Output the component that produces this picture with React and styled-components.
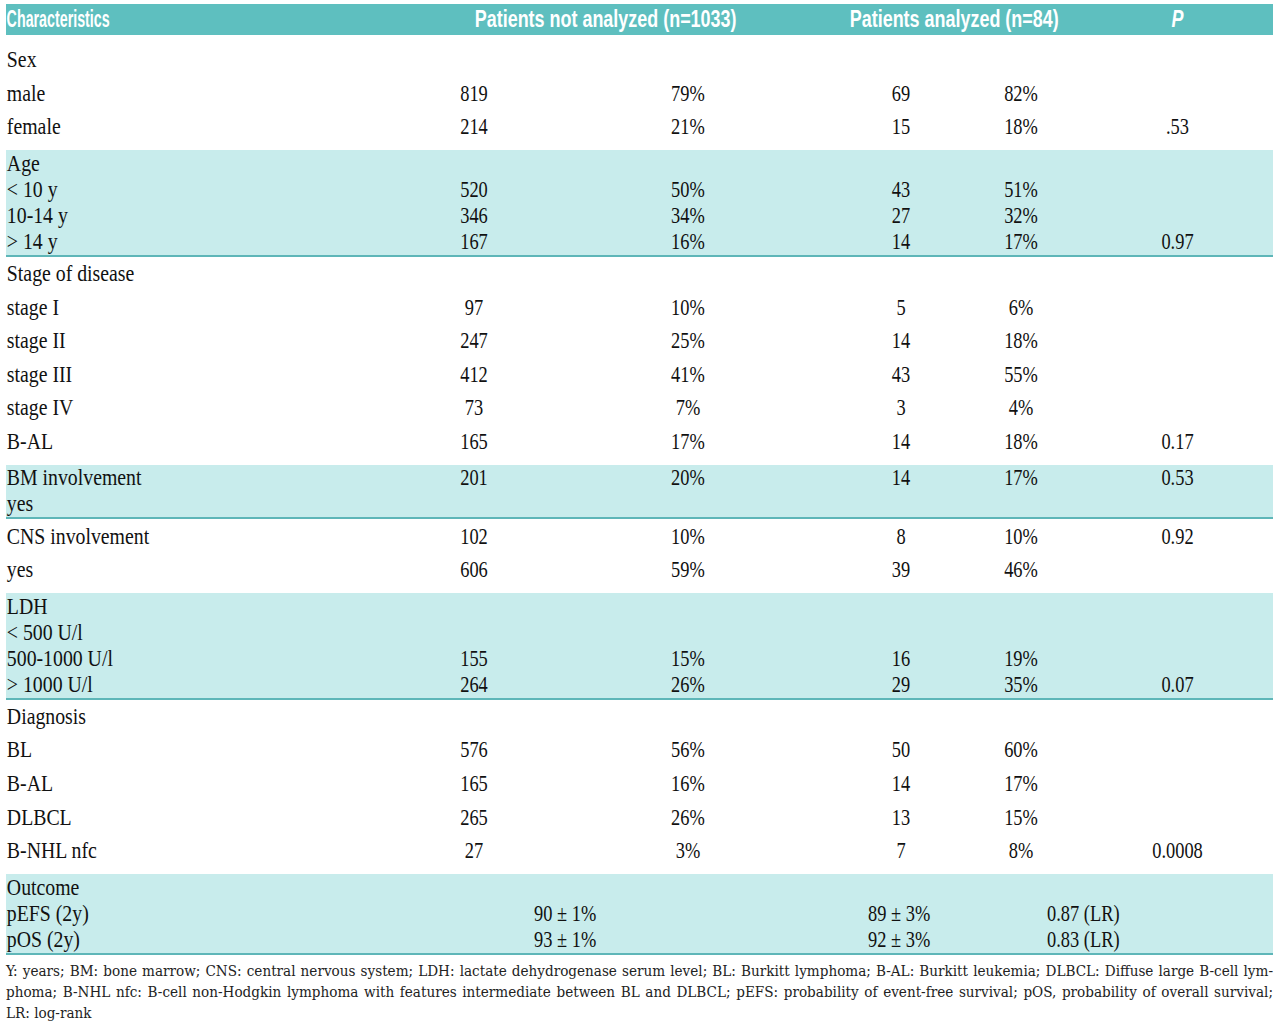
import React from "react";
import styled, { createGlobalStyle } from "styled-components";

const GlobalStyle = createGlobalStyle`
  body {
    margin: 0;
    background: #ffffff;
    color: #111;
  }
`;

const COLS = "408px 120px 308px 118px 122px 1fr";

const sections = [
  {
    band: false,
    first: true,
    rows: [
      ["Sex"],
      ["male", "819", "79%", "69", "82%", ""],
      ["female", "214", "21%", "15", "18%", ".53"],
    ],
  },
  {
    band: true,
    rows: [
      ["Age"],
      ["< 10 y", "520", "50%", "43", "51%", ""],
      ["10-14 y", "346", "34%", "27", "32%", ""],
      ["> 14 y", "167", "16%", "14", "17%", "0.97"],
    ],
  },
  {
    band: false,
    rows: [
      ["Stage of disease"],
      ["stage I", "97", "10%", "5", "6%", ""],
      ["stage II", "247", "25%", "14", "18%", ""],
      ["stage III", "412", "41%", "43", "55%", ""],
      ["stage IV", "73", "7%", "3", "4%", ""],
      ["B-AL", "165", "17%", "14", "18%", "0.17"],
    ],
  },
  {
    band: true,
    rows: [
      ["BM involvement", "201", "20%", "14", "17%", "0.53"],
      ["yes"],
    ],
  },
  {
    band: false,
    rows: [
      ["CNS involvement", "102", "10%", "8", "10%", "0.92"],
      ["yes", "606", "59%", "39", "46%", ""],
    ],
  },
  {
    band: true,
    rows: [
      ["LDH"],
      ["< 500 U/l"],
      ["500-1000 U/l", "155", "15%", "16", "19%", ""],
      ["> 1000 U/l", "264", "26%", "29", "35%", "0.07"],
    ],
  },
  {
    band: false,
    rows: [
      ["Diagnosis"],
      ["BL", "576", "56%", "50", "60%", ""],
      ["B-AL", "165", "16%", "14", "17%", ""],
      ["DLBCL", "265", "26%", "13", "15%", ""],
      ["B-NHL nfc", "27", "3%", "7", "8%", "0.0008"],
    ],
  },
];

const outcome = [
  { label: "pEFS (2y)", left: "90 ± 1%", right: "89 ± 3%", p: "0.87 (LR)" },
  { label: "pOS (2y)", left: "93 ± 1%", right: "92 ± 3%", p: "0.83 (LR)" },
];

const Page = styled.div`
  width: 1267px;
  margin: 4px 7px 0 6px;
`;

const HeaderBar = styled.div`
  display: grid;
  grid-template-columns: 468px 375px 233px 1fr;
  align-items: center;
  height: 31px;
  background: #5ebfbf;
  color: #ffffff;
  font-family: "Liberation Sans", Arial, sans-serif;
  font-weight: 700;
  font-size: 23px;
  line-height: 1;
`;

const HeadCell = styled.div`
  white-space: nowrap;
  padding-left: ${(p) => (p.$center ? 0 : 1)}px;
  transform: scaleX(${(p) => p.$squeeze || 0.78});
  transform-origin: ${(p) => (p.$center ? "center" : "left")};
  text-align: ${(p) => (p.$center ? "center" : "left")};
  font-style: ${(p) => (p.$italic ? "italic" : "normal")};
`;

const Section = styled.div`
  background: ${(p) => (p.$band ? "#c8ecec" : "transparent")};
  border-bottom: ${(p) => (p.$band ? "2px solid #5eb6b8" : "none")};
  padding-top: ${(p) => (p.$first ? 8 : 0)}px;
  padding-bottom: ${(p) => (p.$band ? 0.5 : 6.5)}px;
`;

const Row = styled.div`
  display: grid;
  grid-template-columns: ${COLS};
  align-items: center;
  height: ${(p) => p.$h}px;
  font-family: "Liberation Serif", "Times New Roman", serif;
  font-size: 23px;
  line-height: 1;
`;

const Label = styled.div`
  white-space: nowrap;
  padding-left: 1px;
  transform: scaleX(0.86);
  transform-origin: left center;
`;

const Value = styled.div`
  white-space: nowrap;
  text-align: center;
  transform: scaleX(0.8);
  transform-origin: center;
`;

const Span = styled.div`
  grid-column: ${(p) => p.$col};
  padding-left: ${(p) => p.$indent || 0}px;
  white-space: nowrap;
  transform: scaleX(0.8);
  transform-origin: ${(p) => p.$indent || 0}px center;
`;

const Notes = styled.div`
  margin-top: 6px;
  font-family: "DejaVu Serif Condensed", "DejaVu Serif", serif;
  font-size: 15.1px;
  line-height: 21px;
  color: #222;
`;

const NoteLine = styled.div`
  text-align: ${(p) => (p.$full ? "justify" : "left")};
  text-align-last: ${(p) => (p.$full ? "justify" : "left")};
  white-space: nowrap;
`;

function DataRow({ cells, h }) {
  const [label, ...vals] = cells;
  return (
    <Row $h={h}>
      <Label>{label}</Label>
      {vals.map((v, i) => (
        <Value key={i}>{v}</Value>
      ))}
    </Row>
  );
}

export default function App() {
  return (
    <>
      <GlobalStyle />
      <Page>
        <HeaderBar>
          <HeadCell $squeeze={0.62}>Characteristics</HeadCell>
          <HeadCell>Patients not analyzed (n=1033)</HeadCell>
          <HeadCell>Patients analyzed (n=84)</HeadCell>
          <HeadCell $center $italic>
            P
          </HeadCell>
        </HeaderBar>

        {sections.map((s, si) => (
          <Section key={si} $band={s.band} $first={s.first}>
            {s.rows.map((r, ri) => (
              <DataRow key={ri} cells={r} h={s.band ? 26 : 33.6} />
            ))}
          </Section>
        ))}

        <Section $band>
          <Row $h={26}>
            <Label>Outcome</Label>
          </Row>
          {outcome.map((o) => (
            <Row key={o.label} $h={26}>
              <Label>{o.label}</Label>
              <Span $col="3 / 4">{o.left}</Span>
              <Span $col="4 / 5" $indent={26}>
                {o.right}
              </Span>
              <Span $col="5 / 7" $indent={87}>
                {o.p}
              </Span>
            </Row>
          ))}
        </Section>

        <Notes>
          <NoteLine $full>
            Y: years; BM: bone marrow; CNS: central nervous system; LDH: lactate dehydrogenase serum level; BL: Burkitt lymphoma; B-AL: Burkitt leukemia; DLBCL: Diffuse large B-cell lym-
          </NoteLine>
          <NoteLine $full>
            phoma; B-NHL nfc: B-cell non-Hodgkin lymphoma with features intermediate between BL and DLBCL; pEFS: probability of event-free survival; pOS, probability of overall survival;
          </NoteLine>
          <NoteLine>LR: log-rank</NoteLine>
        </Notes>
      </Page>
    </>
  );
}
